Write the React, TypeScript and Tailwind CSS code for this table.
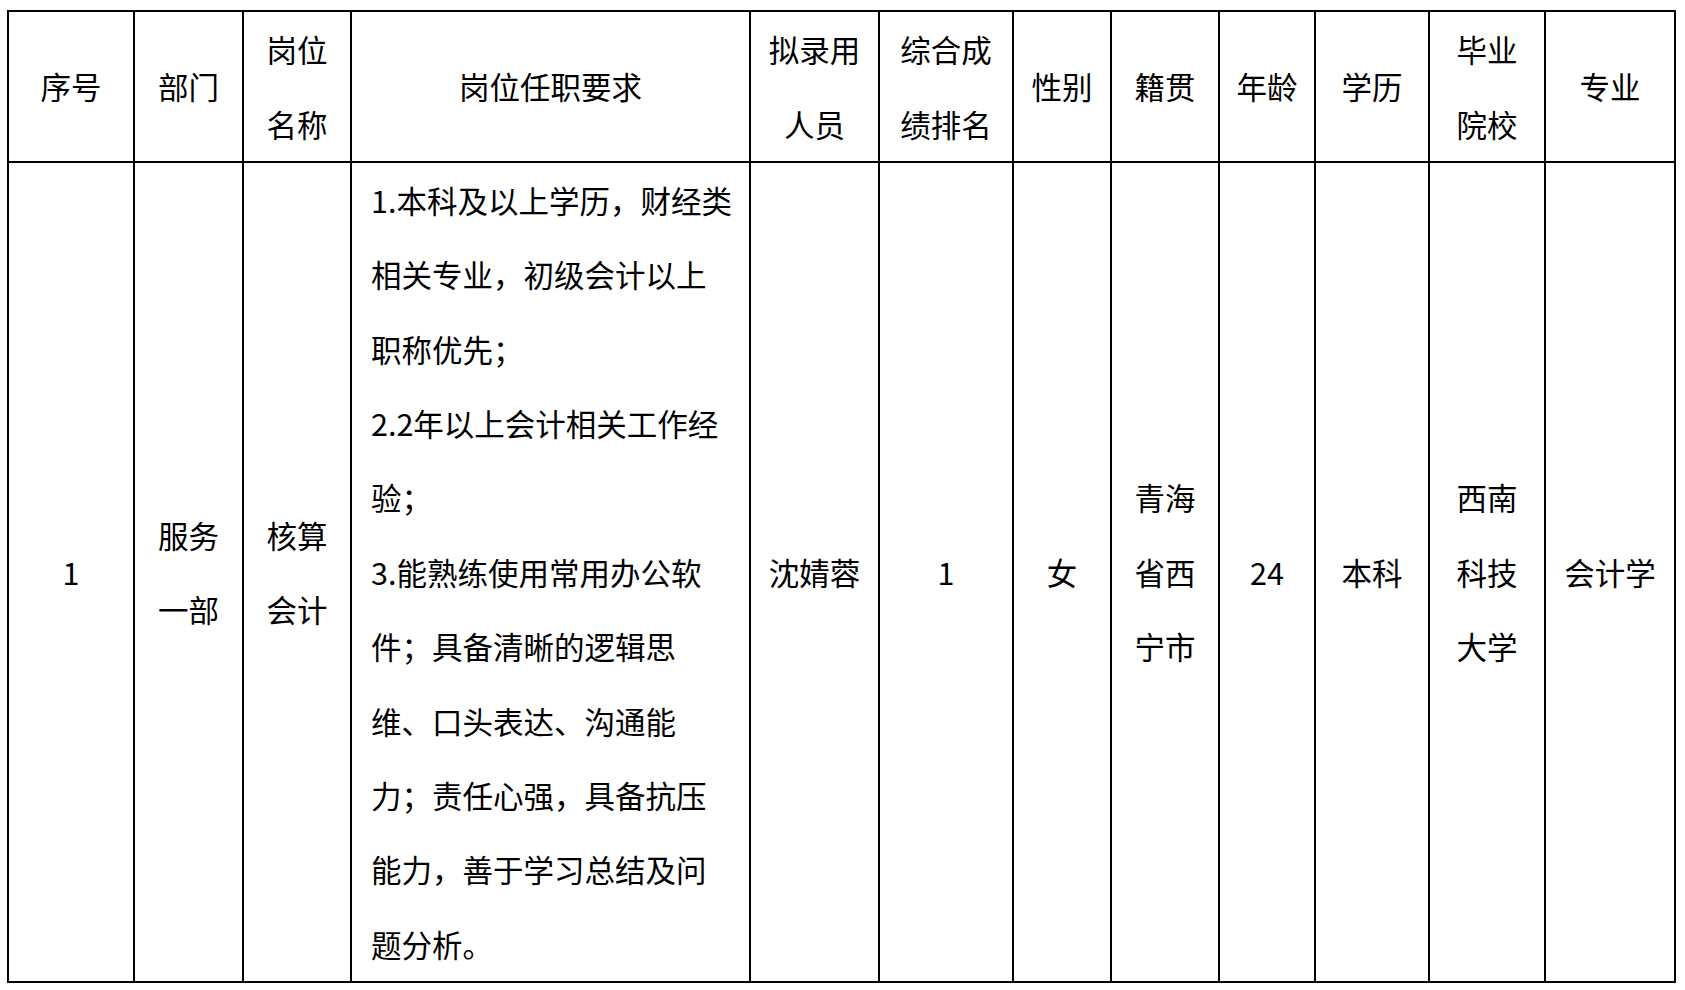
import React from "react";

const headers: string[][] = [
  ["序号"],
  ["部门"],
  ["岗位", "名称"],
  ["岗位任职要求"],
  ["拟录用", "人员"],
  ["综合成", "绩排名"],
  ["性别"],
  ["籍贯"],
  ["年龄"],
  ["学历"],
  ["毕业", "院校"],
  ["专业"],
];

const body: string[][] = [
  ["1"],
  ["服务", "一部"],
  ["核算", "会计"],
  [
    "1.本科及以上学历，财经类",
    "相关专业，初级会计以上",
    "职称优先；",
    "2.2年以上会计相关工作经",
    "验；",
    "3.能熟练使用常用办公软",
    "件；具备清晰的逻辑思",
    "维、口头表达、沟通能",
    "力；责任心强，具备抗压",
    "能力，善于学习总结及问",
    "题分析。",
  ],
  ["沈婧蓉"],
  ["1"],
  ["女"],
  ["青海", "省西", "宁市"],
  ["24"],
  ["本科"],
  ["西南", "科技", "大学"],
  ["会计学"],
];

function Cell({ lines, left }: { lines: string[]; left?: boolean }) {
  return (
    <div
      className={
        left
          ? "bg-white flex flex-col justify-center items-start pl-[19px] whitespace-nowrap"
          : "bg-white flex flex-col justify-center items-center text-center whitespace-nowrap"
      }
    >
      {lines.map((l, i) => (
        <div key={i}>{l}</div>
      ))}
    </div>
  );
}

export default function App() {
  return (
    <div className="min-h-[990px] w-full bg-white pt-[10px] pl-[7px] font-['Noto_Sans_CJK_SC','Microsoft_YaHei',sans-serif] text-[30.5px] leading-[74.4px] text-black">
      <div className="inline-grid grid-cols-[124px_107px_106px_397px_127px_132px_96px_106px_94px_112px_114px_128px] grid-rows-[149px_818px] gap-[2px] bg-black p-[2px]">
        {headers.map((h, i) => (
          <Cell key={"h" + i} lines={h} />
        ))}
        {body.map((b, i) => (
          <Cell key={"b" + i} lines={b} left={i === 3} />
        ))}
      </div>
    </div>
  );
}
